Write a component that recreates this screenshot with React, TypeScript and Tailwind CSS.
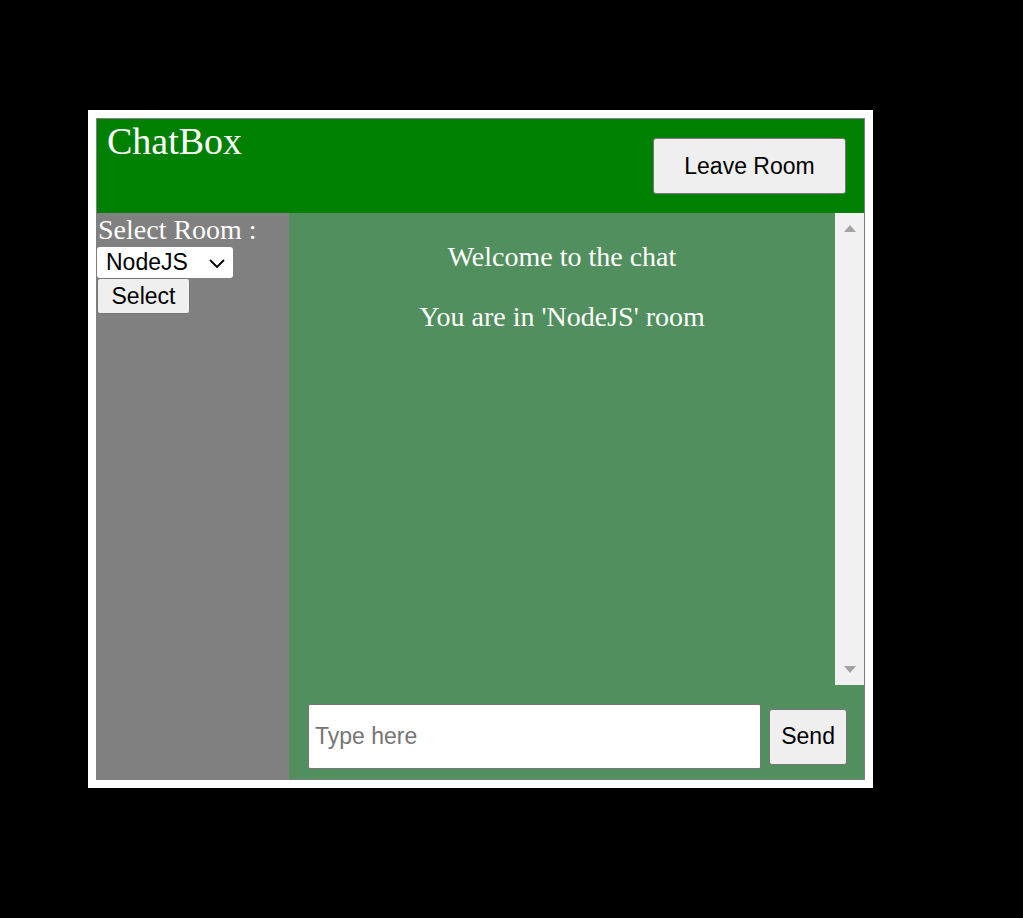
import React from 'react';

const serif = "font-['Liberation_Serif','Times_New_Roman',serif]";
const sans = "font-['Liberation_Sans',Arial,sans-serif]";

const ScrollArrow: React.FC<{ down?: boolean }> = ({ down }) => (
  <svg width="12" height="7" viewBox="0 0 12 7" className="block">
    {down ? (
      <polygon points="0,0 12,0 6,7" fill="#a3a3a3" />
    ) : (
      <polygon points="0,7 12,7 6,0" fill="#a3a3a3" />
    )}
  </svg>
);

export default function App() {
  return (
    <div className="min-h-[918px] w-full bg-black pl-[88px] pt-[110px]">
      <div className="w-[785px] bg-white p-2">
        <div className="flex h-[662px] flex-col border border-[#808080]">
          {/* header */}
          <header className="flex h-[94px] shrink-0 items-start justify-between bg-[#008000]">
            <h1 className={`${serif} pl-[10px] text-[38px] leading-[44px] text-white`}>ChatBox</h1>
            <button
              className={`${sans} mr-[18px] mt-[19px] h-[56px] w-[193px] rounded-[3px] border border-[#767676] bg-[#efefef] text-[23px] text-black`}
            >
              Leave Room
            </button>
          </header>

          <div className="flex min-h-0 flex-1">
            {/* sidebar */}
            <aside className="w-[192px] shrink-0 bg-[#808080]">
              <label className={`${serif} block pl-px text-[28px] leading-[33px] text-white`}>
                Select Room :
              </label>
              <div className="relative mt-px h-[31px] w-[136px] rounded-[3px] bg-white">
                <select
                  defaultValue="NodeJS"
                  className={`${sans} h-full w-full appearance-none bg-transparent pl-[9px] text-[23px] leading-[31px] text-black outline-none`}
                >
                  <option>NodeJS</option>
                  <option>Python</option>
                  <option>PHP</option>
                </select>
                <svg
                  width="16"
                  height="9"
                  viewBox="0 0 16 9"
                  className="pointer-events-none absolute right-[8px] top-[12px]"
                >
                  <polyline points="1,1 8,8 15,1" fill="none" stroke="#000" strokeWidth="1.8" />
                </svg>
              </div>
              <button
                className={`${sans} mt-0 h-[36px] w-[93px] rounded-[3px] border border-[#767676] bg-[#efefef] text-[23px] leading-[26px] text-black`}
              >
                Select
              </button>
            </aside>

            {/* chat */}
            <section className="flex min-w-0 flex-1 flex-col bg-[#528f5e]">
              <div className="flex h-[472px] shrink-0">
                <div className={`${serif} flex-1 text-center text-[28px] leading-[32px] text-white`}>
                  <p className="mt-[28px]">Welcome to the chat</p>
                  <p className="mt-[28px]">You are in 'NodeJS' room</p>
                </div>
                <div className="flex w-[29px] flex-col items-center justify-between bg-[#f1f1f1] pb-[12px] pt-[12px]">
                  <ScrollArrow />
                  <ScrollArrow down />
                </div>
              </div>
              <div className="flex flex-1 items-center gap-[8px] pb-[10px] pl-[19px] pr-[17px] pt-[19px]">
                <input
                  placeholder="Type here"
                  className={`${sans} h-[65px] w-[454px] rounded-[2px] border border-[#767676] bg-white px-[6px] text-[23px] text-black outline-none placeholder:text-[#757575]`}
                />
                <button
                  className={`${sans} h-[56px] w-[78px] rounded-[3px] border border-[#767676] bg-[#efefef] text-[23px] text-black`}
                >
                  Send
                </button>
              </div>
            </section>
          </div>
        </div>
      </div>
    </div>
  );
}
